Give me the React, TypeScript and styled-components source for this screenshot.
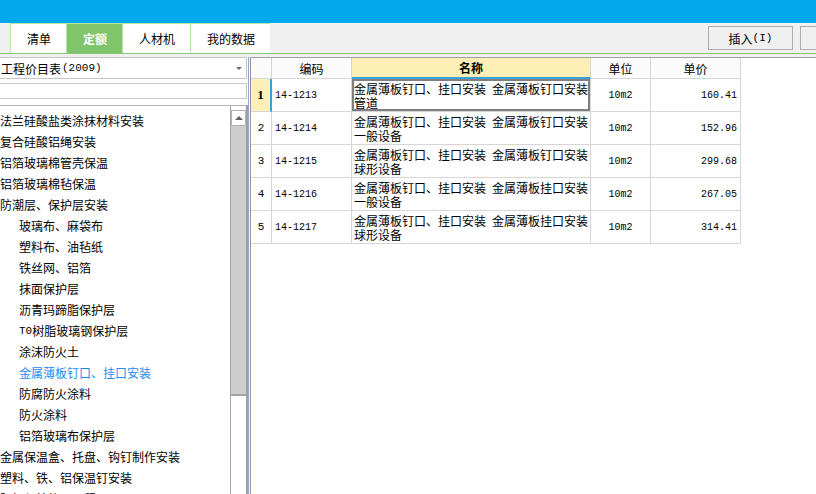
import React from "react";
import styled, { createGlobalStyle } from "styled-components";

const GlobalStyle = createGlobalStyle`
  html, body { margin: 0; padding: 0; background: #f0f0f0; }
  body {
    font-family: "Noto Sans CJK SC", "Noto Sans", sans-serif;
    font-size: 12px;
    color: #000;
  }
  * { box-sizing: border-box; }
`;

const Screen = styled.div`
  width: 816px;
  height: 494px;
  overflow: hidden;
  display: flex;
  flex-direction: column;
  background: #f0f0f0;
`;

const TitleBar = styled.div`
  flex: none;
  height: 23px;
  background: #03a9ec;
`;

const TabBar = styled.div`
  flex: none;
  height: 31px;
  display: flex;
  align-items: stretch;
  padding-left: 10px;
  border-bottom: 1px solid #8dc57b;
  background: #f0f0f0;
`;

const Tab = styled.div<{ $active?: boolean }>`
  display: flex;
  align-items: center;
  justify-content: center;
  padding: 0 15px 0 16px;
  border-top: 1px solid #b8e6a8;
  border-left: 1px solid #b8e6a8;
  background: ${(p) => (p.$active ? "#80c46b" : "#ffffff")};
  color: ${(p) => (p.$active ? "#ffffff" : "#000000")};
  font-weight: ${(p) => (p.$active ? 700 : 400)};
  &:last-of-type {
    border-right: 1px solid #b8e6a8;
  }
`;

const Tools = styled.div`
  flex: none;
  margin-left: auto;
  margin-right: -69px;
  display: flex;
  align-items: center;
  gap: 7px;
`;

const ToolButton = styled.div`
  width: 85px;
  height: 24px;
  display: flex;
  align-items: center;
  justify-content: center;
  border: 1px solid #adadad;
  background: #f0f0f0;
`;

const Mono = styled.span<{ $size?: number }>`
  font-family: "Liberation Mono", "DejaVu Sans Mono", monospace;
  font-size: ${(p) => p.$size ?? 10}px;
`;

const Body = styled.div`
  flex: 1;
  min-height: 0;
  display: flex;
  padding-top: 3px;
`;

const LeftPanel = styled.div`
  flex: none;
  width: 248px;
  display: flex;
  flex-direction: column;
  background: #ffffff;
`;

const Combo = styled.div`
  flex: none;
  height: 22px;
  margin: 0 1px 0 -1px;
  display: flex;
  align-items: center;
  gap: 1px;
  padding-left: 1px;
  border: 1px solid #c6c6c6;
  background: #ffffff;
`;

const ComboArrow = styled.span`
  margin-left: auto;
  margin-right: 4px;
  width: 0;
  height: 0;
  border-left: 3px solid transparent;
  border-right: 3px solid transparent;
  border-top: 3px solid #6d6d6d;
`;

const Search = styled.div`
  flex: none;
  height: 16px;
  margin: 4px 1px 0 -1px;
  border: 1px solid #c6c6c6;
  background: #ffffff;
`;

const ListBox = styled.div`
  flex: 1;
  min-height: 0;
  margin-top: 6px;
  display: flex;
  border-top: 1px solid #b4b4b4;
  border-right: 2px solid #a0a0a0;
`;

const Tree = styled.div`
  flex: 1;
  min-width: 0;
  overflow: hidden;
  padding-top: 4px;
`;

const TreeRow = styled.div<{ $level: number; $active?: boolean }>`
  height: 21px;
  display: flex;
  align-items: center;
  white-space: nowrap;
  padding-left: ${(p) => p.$level * 19}px;
  color: ${(p) => (p.$active ? "#1a8df2" : "#000000")};
`;

const ScrollBar = styled.div`
  flex: none;
  width: 16px;
  display: flex;
  flex-direction: column;
  padding-top: 4px;
  border-left: 1px solid #a6a6a6;
`;

const ScrollUp = styled.div`
  flex: none;
  height: 16px;
  display: flex;
  align-items: center;
  justify-content: center;
  border: 1px solid #b4b4b4;
  background: #ffffff;
`;

const UpTriangle = styled.span`
  width: 0;
  height: 0;
  border-left: 4px solid transparent;
  border-right: 4px solid transparent;
  border-bottom: 4px solid #606060;
`;

const Thumb = styled.div`
  flex: none;
  height: 270px;
  background: #cdcdcd;
  border-bottom: 2px solid #a3a3a3;
`;

const Splitter = styled.div`
  flex: none;
  width: 2px;
  border-left: 1px solid #9aa8c4;
  background: #f4f6fa;
`;

const RightPanel = styled.div`
  flex: 1;
  min-width: 0;
  background: #ffffff;
  border-top: 1px solid #a0a0a0;
  border-left: 1px solid #8c99b5;
`;

const Grid = styled.div`
  display: grid;
  grid-template-columns: 21px 80px 239px 60px 90px;
  grid-template-rows: 21px;
  grid-auto-rows: 33px;
  width: max-content;
`;

const HeadCell = styled.div<{ $active?: boolean }>`
  display: flex;
  align-items: center;
  justify-content: center;
  border-right: 1px solid #d6d6d6;
  border-bottom: ${(p) => (p.$active ? "2px solid #3aa0d8" : "1px solid #d6d6d6")};
  background: ${(p) => (p.$active ? "#feefb6" : "#fbfbfb")};
  font-weight: ${(p) => (p.$active ? 700 : 400)};
`;

const NumCell = styled.div<{ $current?: boolean }>`
  display: flex;
  align-items: center;
  justify-content: center;
  border-right: ${(p) => (p.$current ? "2px solid #3aa0d8" : "1px solid #d6d6d6")};
  border-bottom: 1px solid #d6d6d6;
  background: ${(p) => (p.$current ? "#feefb6" : "#ffffff")};
  font-family: ${(p) =>
    p.$current ? '"Liberation Serif", serif' : '"Liberation Mono", monospace'};
  font-size: ${(p) => (p.$current ? 13 : 11)}px;
  font-weight: ${(p) => (p.$current ? 700 : 400)};
`;

const Cell = styled.div<{ $align: "left" | "center" | "right" }>`
  display: flex;
  align-items: center;
  justify-content: ${(p) =>
    p.$align === "left" ? "flex-start" : p.$align === "right" ? "flex-end" : "center"};
  padding: 0 3px;
  border-right: 1px solid #d6d6d6;
  border-bottom: 1px solid #d6d6d6;
  font-family: "Liberation Mono", "DejaVu Sans Mono", monospace;
  font-size: 10px;
`;

const NameCell = styled.div<{ $selected?: boolean }>`
  display: flex;
  flex-direction: column;
  justify-content: center;
  padding: 1px 2px 0;
  border-right: 1px solid #d6d6d6;
  border-bottom: 1px solid #d6d6d6;
  line-height: 14px;
  white-space: nowrap;
  box-shadow: ${(p) => (p.$selected ? "inset 0 0 0 2px #7f7f7f" : "none")};
`;

const treeItems: { text: React.ReactNode; level: number; active?: boolean }[] = [
  { text: "法兰硅酸盐类涂抹材料安装", level: 0 },
  { text: "复合硅酸铝绳安装", level: 0 },
  { text: "铝箔玻璃棉管壳保温", level: 0 },
  { text: "铝箔玻璃棉毡保温", level: 0 },
  { text: "防潮层、保护层安装", level: 0 },
  { text: "玻璃布、麻袋布", level: 1 },
  { text: "塑料布、油毡纸", level: 1 },
  { text: "铁丝网、铝箔", level: 1 },
  { text: "抹面保护层", level: 1 },
  { text: "沥青玛蹄脂保护层", level: 1 },
  {
    text: (
      <>
        <Mono $size={11}>T0</Mono>树脂玻璃钢保护层
      </>
    ),
    level: 1,
  },
  { text: "涂沫防火土", level: 1 },
  { text: "金属薄板钉口、挂口安装", level: 1, active: true },
  { text: "防腐防火涂料", level: 1 },
  { text: "防火涂料", level: 1 },
  { text: "铝箔玻璃布保护层", level: 1 },
  { text: "金属保温盒、托盘、钩钉制作安装", level: 0 },
  { text: "塑料、铁、铝保温钉安装", level: 0 },
  { text: "阴极保护施工工程", level: 0 },
];

const rows = [
  { code: "14-1213", kind: "钉口", sub: "管道", unit: "10m2", price: "160.41" },
  { code: "14-1214", kind: "钉口", sub: "一般设备", unit: "10m2", price: "152.96" },
  { code: "14-1215", kind: "钉口", sub: "球形设备", unit: "10m2", price: "299.68" },
  { code: "14-1216", kind: "挂口", sub: "一般设备", unit: "10m2", price: "267.05" },
  { code: "14-1217", kind: "挂口", sub: "球形设备", unit: "10m2", price: "314.41" },
];

export default function App() {
  return (
    <>
      <GlobalStyle />
      <Screen>
        <TitleBar />
        <TabBar>
          <Tab>清单</Tab>
          <Tab $active>定额</Tab>
          <Tab>人材机</Tab>
          <Tab>我的数据</Tab>
          <Tools>
            <ToolButton>
              插入<Mono $size={11}>(I)</Mono>
            </ToolButton>
            <ToolButton />
          </Tools>
        </TabBar>
        <Body>
          <LeftPanel>
            <Combo>
              工程价目表<Mono $size={11}>(2009)</Mono>
              <ComboArrow />
            </Combo>
            <Search />
            <ListBox>
              <Tree>
                {treeItems.map((it, i) => (
                  <TreeRow key={i} $level={it.level} $active={it.active}>
                    {it.text}
                  </TreeRow>
                ))}
              </Tree>
              <ScrollBar>
                <ScrollUp>
                  <UpTriangle />
                </ScrollUp>
                <Thumb />
              </ScrollBar>
            </ListBox>
          </LeftPanel>
          <Splitter />
          <RightPanel>
            <Grid>
              <HeadCell />
              <HeadCell>编码</HeadCell>
              <HeadCell $active>名称</HeadCell>
              <HeadCell>单位</HeadCell>
              <HeadCell>单价</HeadCell>
              {rows.map((r, i) => (
                <React.Fragment key={r.code}>
                  <NumCell $current={i === 0}>{i + 1}</NumCell>
                  <Cell $align="left">{r.code}</Cell>
                  <NameCell $selected={i === 0}>
                    <span>金属薄板钉口、挂口安装{"\u2002"}金属薄板{r.kind}安装</span>
                    <span>{r.sub}</span>
                  </NameCell>
                  <Cell $align="center">{r.unit}</Cell>
                  <Cell $align="right">{r.price}</Cell>
                </React.Fragment>
              ))}
            </Grid>
          </RightPanel>
        </Body>
      </Screen>
    </>
  );
}
